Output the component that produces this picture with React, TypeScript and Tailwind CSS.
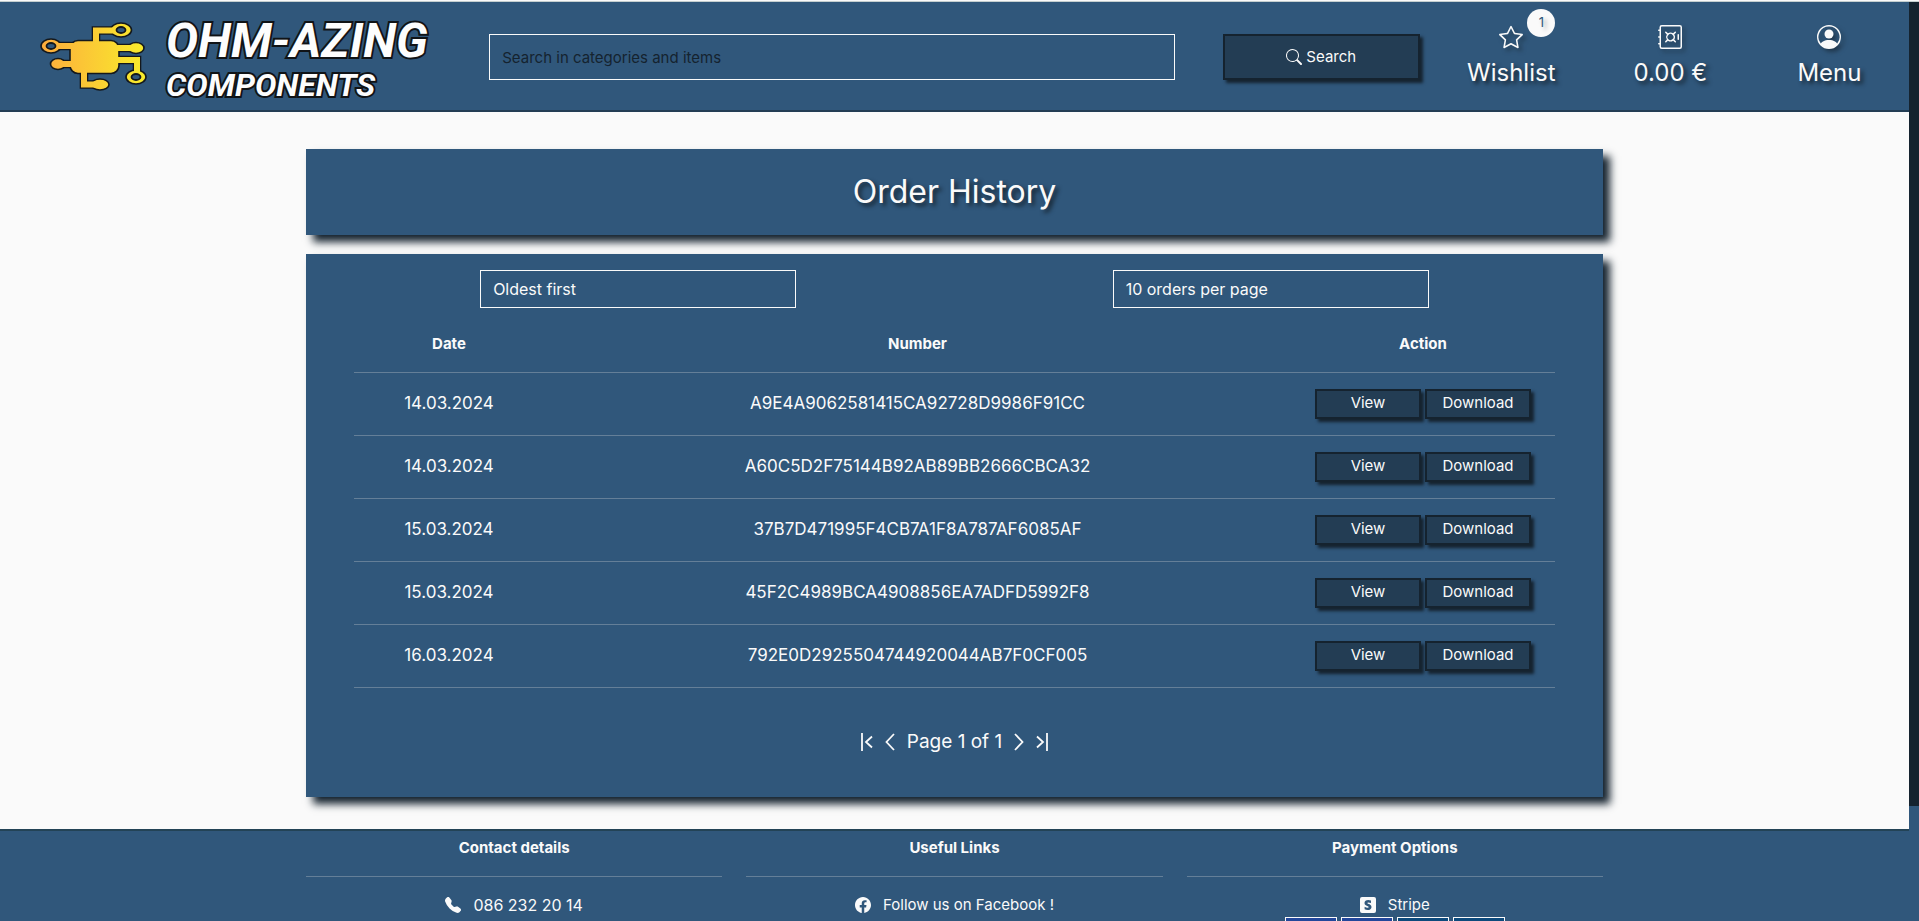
import React from "react";
import {
  BsFacebook,
  BsGeoAltFill,
  BsPersonCircle,
  BsSafe,
  BsSearch,
  BsStar,
  BsStripe,
  BsTelephoneFill,
} from "react-icons/bs";

const orders = [
  { date: "14.03.2024", number: "A9E4A9062581415CA92728D9986F91CC" },
  { date: "14.03.2024", number: "A60C5D2F75144B92AB89BB2666CBCA32" },
  { date: "15.03.2024", number: "37B7D471995F4CB7A1F8A787AF6085AF" },
  { date: "15.03.2024", number: "45F2C4989BCA4908856EA7ADFD5992F8" },
  { date: "16.03.2024", number: "792E0D2925504744920044AB7F0CF005" },
];

function Chip() {
  return (
    <svg className="shrink-0" width="108" height="70" viewBox="0 0 108 70" fill="none" aria-hidden="true">
      <defs>
        <linearGradient id="chip" gradientUnits="userSpaceOnUse" x1="0" y1="0" x2="108" y2="0">
          <stop offset="0" stopColor="#fdab3d" />
          <stop offset="1" stopColor="#f8ee2b" />
        </linearGradient>
      </defs>
      <g stroke="#14181c" strokeWidth="8.6">
        <path d="M56 22V8.5H80M20 24H34M16 42H34M44 50V62.5H60M78 26H92M78 38H97V55" />
      </g>
      <g fill="url(#chip)" stroke="#14181c" strokeWidth="1.6">
        <ellipse cx="81" cy="8" rx="10.5" ry="7" />
        <ellipse cx="11" cy="24" rx="10" ry="7" />
        <ellipse cx="18" cy="42" rx="7.5" ry="5.5" />
        <ellipse cx="60" cy="62.5" rx="9" ry="5.5" />
        <ellipse cx="96" cy="26" rx="8" ry="5.5" />
        <ellipse cx="96" cy="55" rx="10" ry="7" />
        <rect x="30" y="18.5" width="49" height="33" rx="8" />
      </g>
      <path
        d="M56 22V8.5H74M17 24H34M18 42H34M44 50V62.5H60M76 26H94M76 38H97V51"
        stroke="url(#chip)"
        strokeWidth="6"
      />
      <g fill="#30577b" stroke="#14181c" strokeWidth="1.8">
        <ellipse cx="81" cy="8" rx="4.5" ry="3" />
        <ellipse cx="11" cy="24" rx="4.5" ry="3" />
        <ellipse cx="96" cy="55" rx="4.5" ry="3" />
      </g>
    </svg>
  );
}

function Logo() {
  return (
    <a href="#home" className="col-span-3 flex items-center gap-[18px] pl-10 text-[#fdfdfd]">
      <Chip />
      <span className="flex flex-col whitespace-nowrap pt-1 font-['Roboto',sans-serif] font-bold italic [-webkit-text-stroke:4px_#101316] [paint-order:stroke_fill]">
        <span className="text-[48px] leading-[52px]">OHM-AZING</span>
        <span className="text-[32px] leading-9">COMPONENTS</span>
      </span>
    </a>
  );
}

const textShadow = "[text-shadow:3px_3px_4px_#15232f]";
const iconShadow = "drop-shadow-[3px_3px_2px_#15232f99]";

function NavItem({ label, icon, badge }: { label: string; icon: React.ReactNode; badge?: string }) {
  return (
    <a href="#nav" className={`flex flex-col items-center justify-center gap-2 text-2xl ${textShadow}`}>
      <span className="relative">
        <span className={`block ${iconShadow}`}>{icon}</span>
        {badge && (
          <span className="absolute -top-4 left-7 flex size-7 items-center justify-center rounded-full bg-[#fafafa] text-[13px] text-[#30577b] [text-shadow:3px_3px_4px_#15232f66]">
            {badge}
          </span>
        )}
      </span>
      <span>{label}</span>
    </a>
  );
}

const button =
  "border-2 border-[#15232f] bg-[#233d54] text-[15px] shadow-[3px_3px_3px_#15232f]";

function Header() {
  return (
    <header className="grid h-[110px] shrink-0 grid-cols-12 border-b-2 border-[#233d54] bg-[#30577b] pt-0.5">
      <Logo />
      <form className="col-span-6 flex items-center gap-12 px-3" onSubmit={(e) => e.preventDefault()}>
        <input
          aria-label="Search"
          placeholder="Search in categories and items"
          className="h-[46px] min-w-0 flex-1 border border-[#fafafa] bg-transparent px-3 text-[15px] placeholder:text-[#15232f]"
        />
        <button className={`flex h-[46px] w-[197px] items-center justify-center gap-1 ${button}`}>
          <BsSearch size={16} />
          Search
        </button>
      </form>
      <nav className="col-span-3 grid grid-cols-3">
        <NavItem label="Wishlist" icon={<BsStar size={24} />} badge="1" />
        <NavItem label="0.00 €" icon={<BsSafe size={24} />} />
        <NavItem label="Menu" icon={<BsPersonCircle size={24} />} />
      </nav>
    </header>
  );
}

function Arrow({ d, label, width }: { d: string; label: string; width: number }) {
  return (
    <button aria-label={label}>
      <svg width={width} height="18" viewBox={`0 0 ${width} 18`} fill="none" stroke="currentColor" strokeWidth="1.8">
        <path d={d} />
      </svg>
    </button>
  );
}

const cardShadow = "shadow-[7px_7px_8px_#15232f]";
const select = "h-[38px] w-1/2 appearance-none border border-[#fafafa] bg-transparent px-3 text-base";

function Orders() {
  return (
    <section className={`bg-[#30577b] px-4 pt-4 pb-[43px] ${cardShadow}`}>
      <div className="grid grid-cols-2 justify-items-center">
        <select aria-label="Sort order" className={select}>
          <option>Oldest first</option>
        </select>
        <select aria-label="Orders per page" className={select}>
          <option>10 orders per page</option>
        </select>
      </div>
      <div className="px-8 pt-[9px]">
        <table className="w-full table-fixed text-center">
          <colgroup>
            <col className="w-[190px]" />
            <col />
            <col className="w-[264px]" />
          </colgroup>
          <thead>
            <tr className="h-[55px] border-b border-[#647f98] text-[15px] font-bold">
              <th>Date</th>
              <th>Number</th>
              <th>Action</th>
            </tr>
          </thead>
          <tbody>
            {orders.map((o) => (
              <tr key={o.number} className="h-[63px] border-b border-[#647f98]">
                <td className="text-[17px]">{o.date}</td>
                <td className="text-[17px]">{o.number}</td>
                <td className="px-6">
                  <div className="flex gap-1">
                    <button className={`h-[30px] flex-1 ${button}`}>View</button>
                    <button className={`h-[30px] flex-1 ${button}`}>Download</button>
                  </div>
                </td>
              </tr>
            ))}
          </tbody>
        </table>
      </div>
      <div className="flex items-center justify-center gap-3 pt-[42px] text-[19px] leading-6">
        <Arrow label="First page" width={12} d="M1 0V18M11 3.5L5 9L11 14.5" />
        <Arrow label="Previous page" width={10} d="M9 1L1.5 9L9 17" />
        <span>Page 1 of 1</span>
        <Arrow label="Next page" width={10} d="M1 1L8.5 9L1 17" />
        <Arrow label="Last page" width={12} d="M11 0V18M1 3.5L7 9L1 14.5" />
      </div>
    </section>
  );
}

function FooterColumn({ title, children }: { title: string; children: React.ReactNode }) {
  return (
    <div className="flex flex-col items-center text-[15px] leading-6">
      <h2 className="mb-4 w-full border-b border-[#647f98] pt-[5px] pb-4 text-center font-bold">{title}</h2>
      {children}
    </div>
  );
}

function FooterLink({ icon, children }: { icon: React.ReactNode; children: React.ReactNode }) {
  return (
    <a href="#link" className="flex items-center gap-3">
      {icon}
      {children}
    </a>
  );
}

function Footer() {
  return (
    <footer className="shrink-0 border-t-2 border-[#234356] bg-[#30577b]">
      <div className="mx-auto grid max-w-[1297px] grid-cols-3 gap-6">
        <FooterColumn title="Contact details">
          <FooterLink icon={<BsTelephoneFill size={16} />}>
            <span className="text-base">086 232 20 14</span>
          </FooterLink>
        </FooterColumn>
        <FooterColumn title="Useful Links">
          <FooterLink icon={<BsFacebook size={16} />}>Follow us on Facebook !</FooterLink>
          <FooterLink icon={<BsGeoAltFill size={16} />}>Visit our main store</FooterLink>
        </FooterColumn>
        <FooterColumn title="Payment Options">
          <FooterLink icon={<BsStripe size={16} />}>Stripe</FooterLink>
          <div className="flex gap-1">
            <span className="h-8 w-[52px] border border-[#fafafa] bg-[#23479b]" />
            <span className="h-8 w-[52px] border border-[#fafafa] bg-[#23479b]" />
            <span className="h-8 w-[52px] border border-[#fafafa] bg-[#0d4a7c]" />
            <span className="h-8 w-[52px] border border-[#fafafa] bg-[#0d4a7c]" />
          </div>
        </FooterColumn>
      </div>
    </footer>
  );
}

export default function App() {
  return (
    <div className="flex h-screen flex-col overflow-hidden bg-[#fafafa] pt-px font-['Inter','Open_Sans',sans-serif] text-[#fafafa]">
      <div className="h-px shrink-0 bg-[#c5cfcf]" />
      <div className="flex min-h-0 flex-1">
        <div className="flex min-w-0 flex-1 flex-col overflow-hidden">
          <Header />
          <main className="mx-auto flex w-full max-w-[1297px] shrink-0 flex-col gap-[19px] pt-[37px] pb-8">
            <h1 className={`bg-[#30577b] py-6 text-center text-[32px] leading-[38px] ${cardShadow}`}>
              <span className={textShadow}>Order History</span>
            </h1>
            <Orders />
          </main>
          <Footer />
        </div>
        <div className="w-[10px] bg-[#30577b]">
          <div className="h-7/8 bg-[#15232f]" />
        </div>
      </div>
    </div>
  );
}
